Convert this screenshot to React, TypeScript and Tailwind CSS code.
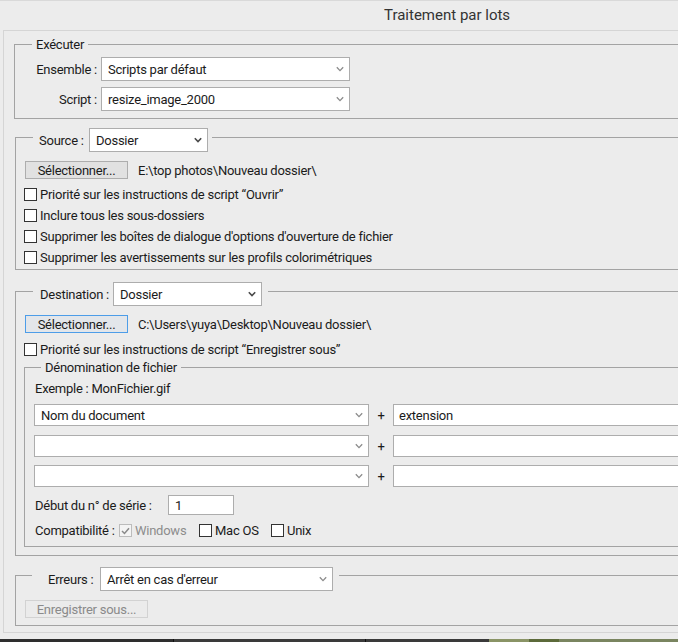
import React from "react";

function Chevron({ dark }: { dark?: boolean }) {
  return (
    <svg width="8" height="6" viewBox="0 0 8 6" className="shrink-0">
      <path
        d="M0.8 1.2 L4 4.6 L7.2 1.2"
        fill="none"
        stroke={dark ? "#4a4a4a" : "#8c8c8c"}
        strokeWidth={dark ? 1.6 : 1.3}
      />
    </svg>
  );
}

function Select({ text, className, dark }: { text: string; className: string; dark?: boolean }) {
  return (
    <div className={"flex items-center justify-between bg-white border border-[#adadad] pl-[6px] pr-[5px] " + className}>
      <span className="whitespace-nowrap">{text}</span>
      <Chevron dark={dark} />
    </div>
  );
}

function Box({ checked, disabled }: { checked?: boolean; disabled?: boolean }) {
  return (
    <div
      className={
        "w-[13px] h-[13px] shrink-0 border flex items-center justify-center " +
        (disabled ? "border-[#bcbcbc] bg-[#f4f4f4]" : "border-[#333333] bg-white")
      }
    >
      {checked && (
        <svg width="9" height="8" viewBox="0 0 9 8">
          <path d="M1 4 L3.5 6.5 L8 1.2" fill="none" stroke="#8a8a8a" strokeWidth="1.5" />
        </svg>
      )}
    </div>
  );
}

function CheckRow({ label }: { label: string }) {
  return (
    <div className="h-[21px] flex items-center ml-[8px]">
      <Box />
      <span className="ml-[3px] whitespace-nowrap">{label}</span>
    </div>
  );
}

export default function App() {
  return (
    <div className="w-[678px] h-[642px] overflow-hidden bg-[#ececec] text-[13px] leading-[15px] tracking-[-0.25px] text-[#1b1b1b] font-['Roboto',sans-serif] flex flex-col">
      {/* title bar */}
      <div className="h-[30px] shrink-0 border-t border-[#d9d9d9] flex items-center pl-[384px]">
        <span className="text-[15px] tracking-normal text-[#333333]">Traitement par lots</span>
      </div>

      {/* outer frame */}
      <div className="ml-[3px] w-[720px] h-[603px] shrink-0 border-t border-l border-b border-[#d5d5d5] pl-[10px] flex flex-col">
        {/* Exécuter */}
        <fieldset className="mt-[6px] border border-[#a3a3a3] pb-[7px]">
          <legend className="ml-[17px] px-[4px] h-[15px]">Exécuter</legend>
          <div className="mt-[5px] flex items-center">
            <span className="w-[82px] text-right">Ensemble :</span>
            <Select text="Scripts par défaut" className="ml-[4px] w-[249px] h-[24px]" />
          </div>
          <div className="mt-[6px] flex items-center">
            <span className="w-[82px] text-right">Script :</span>
            <Select text="resize_image_2000" className="ml-[4px] w-[249px] h-[24px]" />
          </div>
        </fieldset>

        {/* Source */}
        <fieldset className="mt-[9px] ml-[1px] border border-[#a3a3a3] pb-[1px]">
          <legend className="ml-[17px] pl-[6px] pr-[4px] h-[18px] flex items-start">
            <span className="w-[50px] mt-[5px]">Source :</span>
            <Select text="Dossier" dark className="w-[119px] h-[24px] shrink-0" />
          </legend>
          <div className="mt-[15px] flex items-center h-[18px]">
            <div className="ml-[9px] w-[103px] h-[18px] bg-[#e1e1e1] border border-[#adadad] flex items-center justify-center">
              Sélectionner...
            </div>
            <span className="ml-[10px] whitespace-nowrap">E:\top photos\Nouveau dossier\</span>
          </div>
          <div className="mt-[5px]">
            <CheckRow label="Priorité sur les instructions de script “Ouvrir”" />
            <CheckRow label="Inclure tous les sous-dossiers" />
            <CheckRow label="Supprimer les boîtes de dialogue d'options d'ouverture de fichier" />
            <CheckRow label="Supprimer les avertissements sur les profils colorimétriques" />
          </div>
        </fieldset>

        {/* Destination */}
        <fieldset className="mt-[12px] ml-[1px] border border-[#a3a3a3] pb-[8px]">
          <legend className="ml-[17px] pl-[7px] pr-[6px] h-[18px] flex items-start">
            <span className="w-[73px] mt-[5px]">Destination :</span>
            <Select text="Dossier" dark className="w-[149px] h-[24px] shrink-0" />
          </legend>
          <div className="mt-[15px] flex items-center h-[18px]">
            <div className="ml-[9px] w-[103px] h-[18px] bg-[#e3e6ea] border border-[#4d9de8] flex items-center justify-center">
              Sélectionner...
            </div>
            <span className="ml-[10px] whitespace-nowrap">C:\Users\yuya\Desktop\Nouveau dossier\</span>
          </div>
          <div className="mt-[6px]">
            <CheckRow label="Priorité sur les instructions de script “Enregistrer sous”" />
          </div>

          {/* Dénomination */}
          <fieldset className="ml-[8px] border border-[#a3a3a3] pl-[9px] pb-[8px]">
            <legend className="ml-[7px] px-[4px] h-[15px]">Dénomination de fichier</legend>
            <div className="mt-[6px] h-[15px] ml-[1px]">Exemple : MonFichier.gif</div>
            <div className="mt-[8px] flex items-center">
              <Select text="Nom du document" className="w-[335px] h-[22px]" />
              <span className="w-[24px] text-center">+</span>
              <div className="flex-1 h-[22px] bg-white border border-[#adadad] pl-[5px] flex items-center">extension</div>
            </div>
            <div className="mt-[9px] flex items-center">
              <Select text="" className="w-[335px] h-[22px]" />
              <span className="w-[24px] text-center">+</span>
              <div className="flex-1 h-[22px] bg-white border border-[#adadad]" />
            </div>
            <div className="mt-[8px] flex items-center">
              <Select text="" className="w-[335px] h-[22px]" />
              <span className="w-[24px] text-center">+</span>
              <div className="flex-1 h-[22px] bg-white border border-[#adadad]" />
            </div>
            <div className="mt-[8px] flex items-center h-[20px]">
              <span className="w-[133px] ml-[1px]">Début du n° de série :</span>
              <div className="w-[66px] h-[20px] bg-white border border-[#adadad] pl-[6px] flex items-center">1</div>
            </div>
            <div className="mt-[8px] flex items-center h-[15px]">
              <span className="w-[84px] ml-[1px] whitespace-nowrap">Compatibilité :</span>
              <Box checked disabled />
              <span className="ml-[3px] w-[64px] text-[#8d8d8d]">Windows</span>
              <Box />
              <span className="ml-[3px] w-[56px]">Mac OS</span>
              <Box />
              <span className="ml-[3px]">Unix</span>
            </div>
          </fieldset>
        </fieldset>

        {/* Erreurs */}
        <fieldset className="mt-[11px] ml-[1px] border border-[#a3a3a3] pb-[7px]">
          <legend className="ml-[16px] pl-[16px] pr-[6px] h-[16px] flex items-start">
            <span className="w-[52px] mt-[5px]">Erreurs :</span>
            <Select text="Arrêt en cas d'erreur" className="w-[233px] h-[24px] shrink-0" />
          </legend>
          <div className="mt-[17px] ml-[9px] w-[123px] h-[18px] bg-[#ebebeb] border border-[#d2d2d2] text-[#8a8a8a] flex items-center justify-center">
            Enregistrer sous...
          </div>
        </fieldset>
      </div>

      <div className="h-[6px] shrink-0" />
      {/* bottom strip */}
      <div className="h-[3px] shrink-0 flex">
        <div className="w-[173px] bg-[#2e2e2e]" />
        <div className="w-[1px] bg-[#111111]" />
        <div className="w-[191px] bg-[#3a3a3a]" />
        <div className="w-[1px] bg-[#111111]" />
        <div className="w-[123px] bg-[#3a3a3a]" />
        <div className="w-[40px] bg-[#8a9466]" />
        <div className="w-[30px] bg-[#5c6a3a]" />
        <div className="flex-1 bg-[#7a8560]" />
      </div>
    </div>
  );
}
